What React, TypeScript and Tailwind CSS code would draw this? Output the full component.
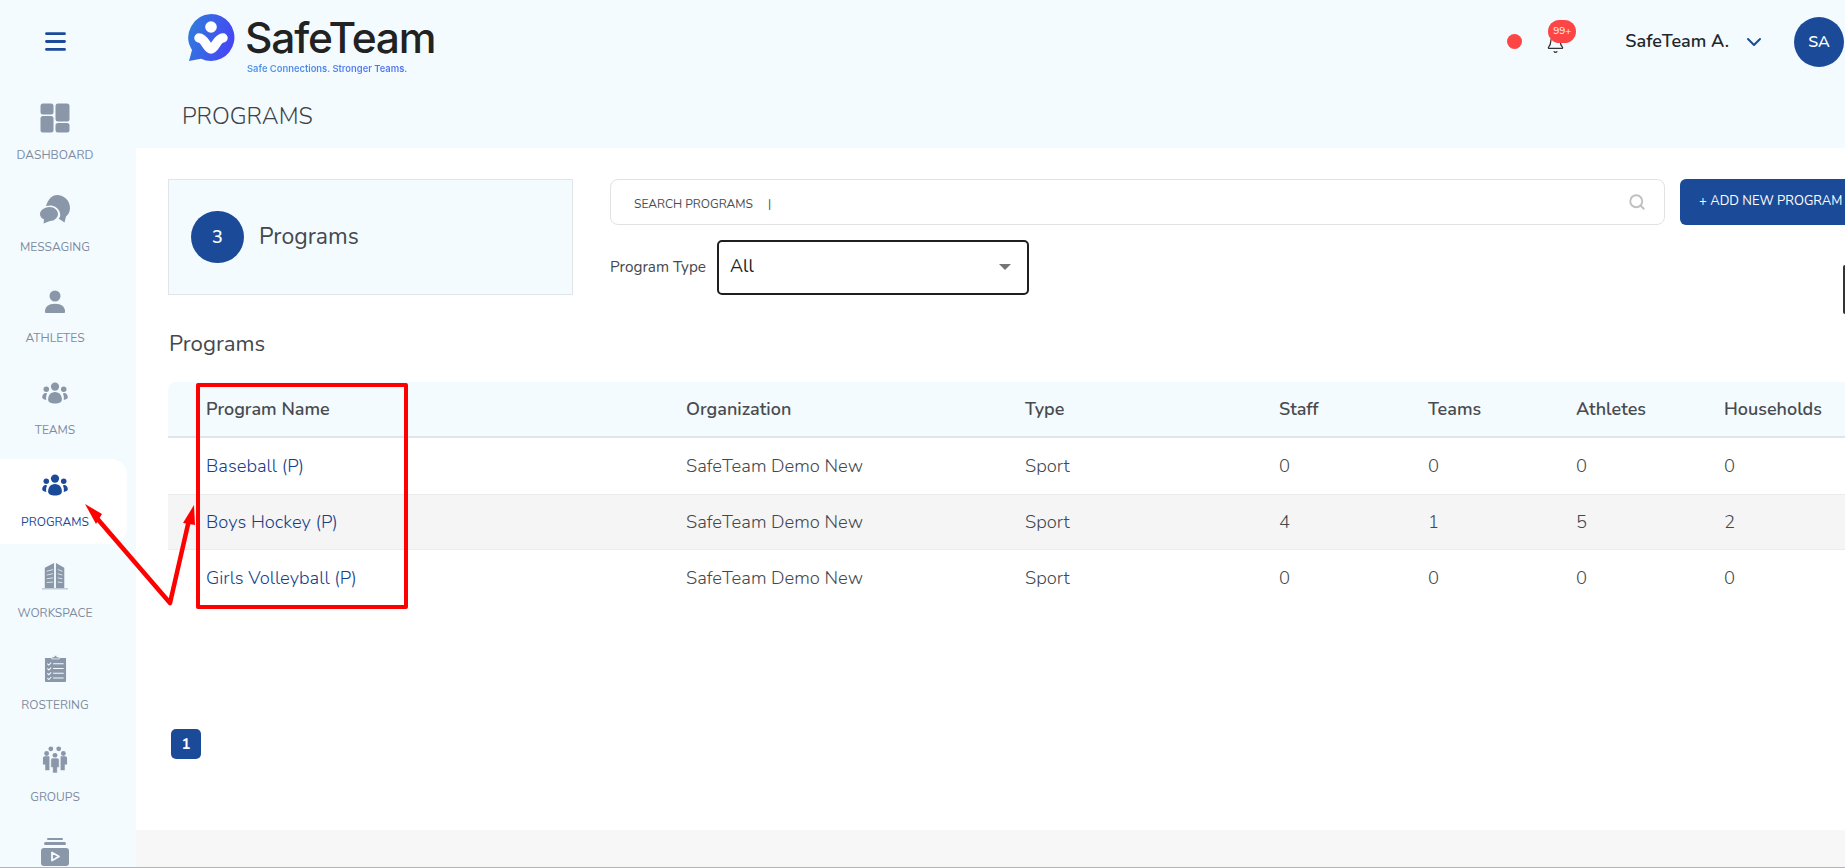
import React from "react";
import { Menu, Bell, ChevronDown, Search } from "lucide-react";

const font = "font-['Nunito','Noto_Sans','Open_Sans',sans-serif]";

const G = "#8a97a9";

function DashIcon({ c }: { c: string }) {
  return (
    <svg width="30" height="30" viewBox="0 0 30 30" fill={c}>
      <rect x="0.5" y="0.5" width="13" height="11" rx="2.5" />
      <rect x="0.5" y="13" width="13" height="16.5" rx="2.5" />
      <rect x="15.5" y="0.5" width="14" height="18" rx="2.5" />
      <rect x="15.5" y="20" width="14" height="9.5" rx="2.5" />
    </svg>
  );
}
function MsgIcon({ c }: { c: string }) {
  return (
    <svg width="30" height="29" viewBox="0 0 30 29" fill={c}>
      <path d="M17 0c7 0 13 5.500 13 13 0 4-2 7-4 8.500l-1.500 6-6-4 1.500-1.500c1.500-5-3-11-9-11.500L6 11C8 4.500 12 0 17 0Z" />
      <path d="M9.500 12c5 0 8.500 3.500 8.500 7s-3.500 7-8 7L3.500 28.500l.5-4c-2.500-1-4-3-4-5.500C0 15 5 12 9.500 12Z" />
    </svg>
  );
}
function UserIcon({ c }: { c: string }) {
  return (
    <svg width="22" height="23" viewBox="0 0 24 25" fill={c}>
      <circle cx="12" cy="6.500" r="6" />
      <path d="M1 24c0-6 4-9 11-9s11 3 11 9c0 .5-.5 1-1 1H2c-.5 0-1-.5-1-1Z" />
    </svg>
  );
}
function TeamIcon({ c }: { c: string }) {
  return (
    <svg width="26" height="22" viewBox="0 0 28 24" fill={c}>
      <circle cx="14" cy="5" r="4.500" />
      <circle cx="4.500" cy="8" r="3" />
      <circle cx="23.500" cy="8" r="3" />
      <path d="M14 11c5 0 7.500 4 7.500 8 0 3-3 4.500-7.500 4.500S6.500 22 6.500 19c0-4 2.500-8 7.500-8Z" />
      <path d="M3.500 12c1 0 1.500.5 2 .5C4.500 14 4 17 4.500 19.500 2 19 0 18 0 16.500 0 14 2 12 3.500 12Z" />
      <path d="M24.500 12c-1 0-1.500.5-2 .5 1 1.500 1.500 4.500 1 7C26 19 28 18 28 16.500 28 14 26 12 24.500 12Z" />
    </svg>
  );
}
function BuildingIcon({ c }: { c: string }) {
  return (
    <svg width="26" height="28" viewBox="0 0 28 30" fill={c}>
      <path d="M3 28V6l10-5v27Z" />
      <path d="M15 1l9 5v22h-9Z" />
      <rect x="0" y="28" width="28" height="1.500" opacity="0.5" />
      <g stroke="#f3fbff" strokeWidth="1" opacity="0.8">
        <path d="M5 10l7-2M5 14l7-1.500M5 18l7-1M5 22l7-.5" />
        <path d="M17 8l5 2M17 12.500l5 1.500M17 17l5 1M17 21.500l5 .5" />
      </g>
    </svg>
  );
}
function ClipIcon({ c }: { c: string }) {
  return (
    <svg width="23" height="28" viewBox="0 0 24 29" fill={c}>
      <path d="M1 4h22v24a1 1 0 0 1-1 1H2a1 1 0 0 1-1-1Z" />
      <path d="M8 3h2.500a1.500 1.500 0 0 1 3 0H16v2H8Z" stroke="#f3fbff" strokeWidth="0.8" />
      <g stroke="#f3fbff" strokeWidth="1.100" fill="none">
        <path d="M3.500 10l1.500 1.500 2.500-2.500M3.500 15l1.500 1.500 2.500-2.500M3.500 20l1.500 1.500 2.500-2.500M3.500 25l1.500 1.500 2.500-2.500" />
        <path d="M9.500 10h11M9.500 15h11M9.500 20h11M9.500 25h11" />
      </g>
    </svg>
  );
}
function GroupIcon({ c }: { c: string }) {
  return (
    <svg width="26" height="29" viewBox="0 0 28 29" fill={c}>
      <circle cx="9.500" cy="3" r="2.600" />
      <circle cx="18" cy="3" r="2.600" />
      <circle cx="5" cy="8" r="2.600" />
      <circle cx="23" cy="8" r="2.600" />
      <circle cx="14" cy="10" r="2.600" />
      <path d="M1 13a2 2 0 0 1 2-2h5v15H3.500v-6H1Z" />
      <path d="M27 13a2 2 0 0 0-2-2h-5v15h4.500v-6H27Z" />
      <path d="M9.500 15a2 2 0 0 1 2-2h5a2 2 0 0 1 2 2v8h-2v6h-5v-6h-2Z" stroke="#f3fbff" strokeWidth="0.6" />
    </svg>
  );
}
function MediaIcon({ c }: { c: string }) {
  return (
    <svg width="28" height="28" viewBox="0 0 28 28" fill={c}>
      <rect x="6" y="0" width="16" height="2" rx="1" />
      <rect x="3" y="4" width="22" height="3" rx="1.500" />
      <rect x="0" y="10" width="28" height="18" rx="3" />
      <path d="M11 14.500v8l7-4Z" fill="none" stroke="#f3fbff" strokeWidth="1.800" strokeLinejoin="round" />
    </svg>
  );
}

function NavItem({ icon, label, active }: { icon: React.ReactNode; label?: string; active?: boolean }) {
  return (
    <div className={`flex h-[85px] w-[127px] shrink-0 flex-col items-center rounded-r-2xl pr-[17px] pt-[9px] ${active ? "bg-white" : ""}`}>
      <div className="flex h-[34px] items-center justify-center">{icon}</div>
      {label && <div className={`mt-[12px] text-[12px] leading-[16px] ${active ? "text-[#1b4b98]" : "text-[#7f8c9f]"}`}>{label}</div>}
    </div>
  );
}

function Logo() {
  return (
    <div className="flex items-start gap-[10px]">
      <svg width="48" height="48" viewBox="0 0 48 48">
        <defs>
          <linearGradient id="lg" x1="0" y1="0" x2="1" y2="0.3">
            <stop offset="0" stopColor="#2f80d8" />
            <stop offset="1" stopColor="#4548f5" />
          </linearGradient>
        </defs>
        <path d="M24 0a23.500 23.500 0 1 1-10 44.800L2 47l3-11A23.500 23.500 0 0 1 24 0Z" fill="url(#lg)" />
        <circle cx="24" cy="13" r="5.800" fill="#fff" />
        <path d="M12 24C18 24 20 35 24 35S30 24 36 24" fill="none" stroke="#fff" strokeWidth="9.500" strokeLinecap="round" strokeLinejoin="round" />
      </svg>
      <div className="flex flex-col">
        <div className="font-['Inter',sans-serif] text-[42.500px] font-medium leading-[48px] tracking-[-1.200px] text-[#222222]">SafeTeam</div>
        <div className="ml-[2px] mt-[1px] bg-gradient-to-r from-[#4a93e4] to-[#5468f2] bg-clip-text font-['Inter',sans-serif] text-[9.400px] font-semibold leading-[11px] text-transparent">Safe Connections. Stronger Teams.</div>
      </div>
    </div>
  );
}

const rows = [
  ["Baseball (P)", "SafeTeam Demo New", "Sport", "0", "0", "0", "0"],
  ["Boys Hockey (P)", "SafeTeam Demo New", "Sport", "4", "1", "5", "2"],
  ["Girls Volleyball (P)", "SafeTeam Demo New", "Sport", "0", "0", "0", "0"],
];
const heads = ["Program Name", "Organization", "Type", "Staff", "Teams", "Athletes", "Households"];
const grid = "grid grid-cols-[480px_339px_254px_149px_148px_148px_1fr]";

export default function App() {
  return (
    <div className={`relative flex h-[868px] w-[1845px] overflow-hidden bg-[#f3fbff] ${font}`}>
      <aside className="flex h-[868px] w-[136px] shrink-0 flex-col overflow-hidden">
        <div className="flex h-[83px] w-[110px] shrink-0 items-center justify-center">
          <Menu size={27} strokeWidth={2.500} color="#1b4b98" />
        </div>
        <div className="mt-[9px] flex flex-col gap-[6.700px]">
          <NavItem label="DASHBOARD" icon={<DashIcon c={G} />} />
          <NavItem label="MESSAGING" icon={<MsgIcon c={G} />} />
          <NavItem label="ATHLETES" icon={<UserIcon c={G} />} />
          <NavItem label="TEAMS" icon={<TeamIcon c={G} />} />
          <NavItem label="PROGRAMS" active icon={<TeamIcon c="#1b4b98" />} />
          <NavItem label="WORKSPACE" icon={<BuildingIcon c={G} />} />
          <NavItem label="ROSTERING" icon={<ClipIcon c={G} />} />
          <NavItem label="GROUPS" icon={<GroupIcon c={G} />} />
          <NavItem icon={<MediaIcon c={G} />} />
        </div>
      </aside>

      <div className="flex min-w-0 flex-1 flex-col">
        <header className="h-[148px] shrink-0">
          <div className="flex h-[84px] items-start justify-between pl-[51px]">
            <div className="pt-[14px]"><Logo /></div>
            <div className="flex h-[83px] items-center pr-[1px]">
              <div className="h-[15px] w-[15px] rounded-full bg-[#fd4546]" />
              <div className="relative ml-[25px] mr-[53px] h-[24px] w-[25px]">
                <Bell size={19} strokeWidth={1.600} color="#333" className="absolute left-[-1px] top-[5px]" />
                <div className="absolute left-[1px] top-[-10px] flex h-[23px] w-[28px] items-center justify-center rounded-full bg-[#fd4546] text-[10px] text-white">99+</div>
              </div>
              <div className="text-[18px] font-semibold text-[#23272c]">SafeTeam A.</div>
              <ChevronDown size={24} strokeWidth={2} color="#1b4b98" className="ml-[13px]" />
              <div className="ml-[28px] flex h-[50px] w-[50px] items-center justify-center rounded-full bg-[#1b4b98] text-[16px] font-semibold text-white">SA</div>
            </div>
          </div>
          <div className="pl-[46px] pt-[18px] text-[23.400px] font-light leading-[28px] text-[#3f4247]">PROGRAMS</div>
        </header>

        <main className="flex-1 bg-white">
          <div className="h-[682px] pl-[32px] pt-[31px]">
            <div className="flex">
              <div className="flex h-[116px] w-[405px] shrink-0 items-center border border-[#dfe5ea] bg-[#f3fbff] pl-[22px]">
                <div className="flex h-[52px] w-[53px] items-center justify-center rounded-full bg-[#1b4b98] text-[18px] font-semibold text-white">3</div>
                <div className="ml-[15px] text-[23px] text-[#44484d]">Programs</div>
              </div>
              <div className="ml-[37px] w-[1300px] shrink-0">
                <div className="flex">
                  <div className="flex h-[46px] w-[1055px] shrink-0 items-center justify-between rounded-lg border border-[#e2e2e2] pl-[23px] pr-[18px]">
                    <div className="pt-[3px] text-[12px] text-[#4a4d52]">SEARCH PROGRAMS<span className="ml-[15px]">|</span></div>
                    <Search size={18} strokeWidth={2.500} color="#bfbfbf" />
                  </div>
                  <div className="ml-[15px] flex h-[46px] w-[190px] shrink-0 items-center rounded-md bg-[#1b4b98] pl-[19px] text-[13px] text-white">+ ADD NEW PROGRAM</div>
                </div>
                <div className="mt-[15px] flex items-center">
                  <div className="text-[15.300px] text-[#44484d]">Program Type</div>
                  <div className="ml-[11px] flex h-[55px] w-[312px] items-center justify-between rounded-[5px] border-2 border-[#1f1f1f] pb-[2px] pl-[11px] pr-[16px] text-[18px] text-[#222]">
                    All
                    <div className="h-0 w-0 border-x-[6px] border-t-[6px] border-x-transparent border-t-[#757575]" />
                  </div>
                </div>
              </div>
            </div>

            <div className="ml-[1px] mt-[35px] text-[22.200px] leading-[28px] text-[#44484d]">Programs</div>

            <div className="mt-[24px] w-[1760px]">
              <div className={`${grid} h-[56px] items-center rounded-t-lg border-b-2 border-[#dfe5ea] bg-[#f3fbff] pl-[38px] pt-[1px] text-[18px] font-semibold text-[#484b50]`}>
                {heads.map((h) => <div key={h}>{h}</div>)}
              </div>
              {rows.map((r, i) => (
                <div key={r[0]} className={`${grid} h-[56px] items-center pl-[38px] text-[18.400px] font-light text-[#44484d] ${i === 1 ? "border-y border-[#ececec] bg-[#f5f5f5]" : ""}`}>
                  {r.map((c, j) => <div key={j} className={j === 0 ? "text-[#153f8c]" : ""}>{c}</div>)}
                </div>
              ))}
            </div>

            <div className="ml-[3px] mt-[123px] flex h-[30px] w-[30px] items-center justify-center rounded-[5px] bg-[#1b4b98] text-[15px] font-bold text-white">1</div>
          </div>
          <div className="h-[37px] bg-[#f7f7f7]" />
        </main>
      </div>

      <div className="absolute bottom-0 left-0 h-[1px] w-full bg-[#b5b3b8]" />
      <div className="absolute right-0 top-[265px] h-[49px] w-[2px] rounded-l bg-[#333]" />

      <div className="absolute left-[196px] top-[383px] h-[226px] w-[212px] rounded-[2px] border-[4px] border-[#ff0000]" />
      <svg className="pointer-events-none absolute left-0 top-0" width="1845" height="868" viewBox="0 0 1845 868">
        <path d="M95 516L170 603L189 520" stroke="#ff0000" strokeWidth="4.500" fill="none" strokeLinejoin="round" />
        <path d="M85 504L102 514L96 524Z" fill="#ff0000" />
        <path d="M194 505L183 523L195 525Z" fill="#ff0000" />
      </svg>
    </div>
  );
}
